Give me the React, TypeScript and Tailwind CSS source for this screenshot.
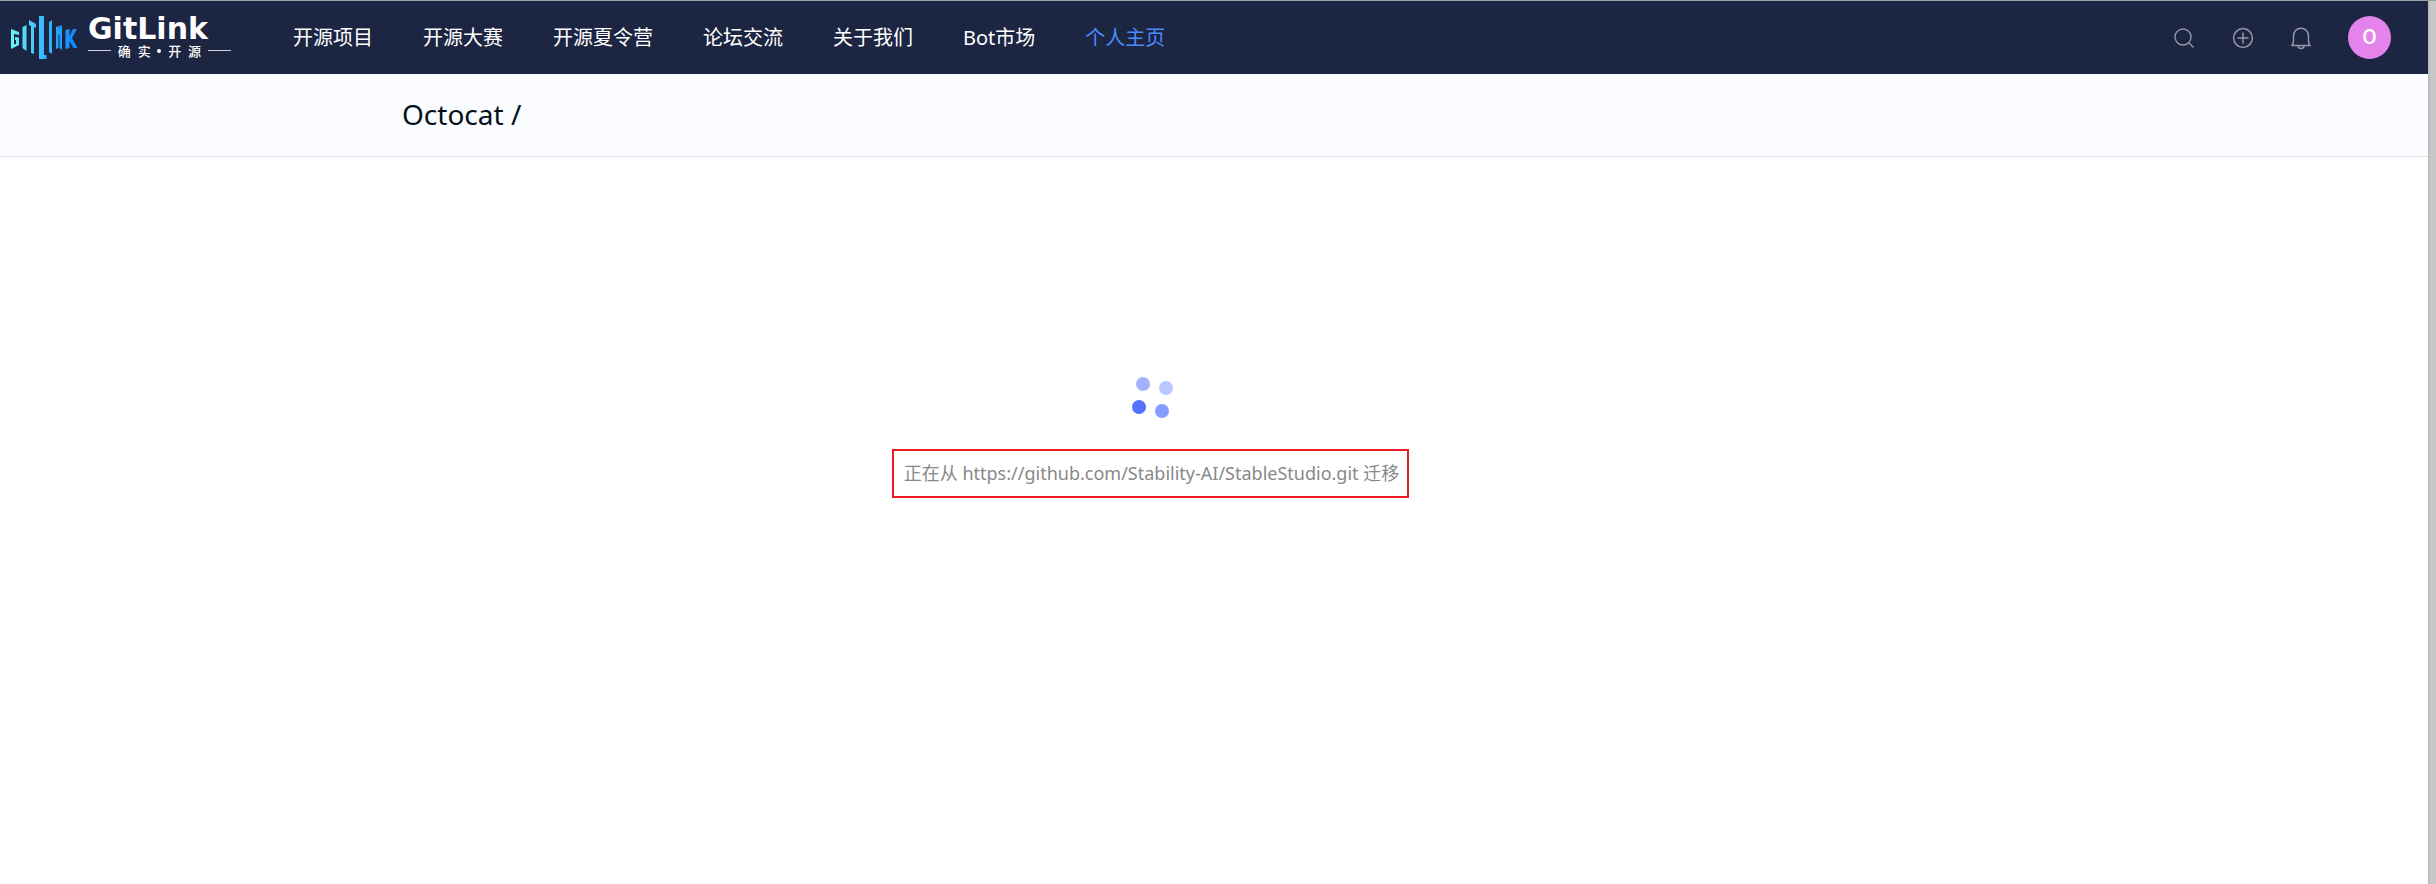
import React from "react";

const links = ["开源项目", "开源大赛", "开源夏令营", "论坛交流", "关于我们", "Bot市场", "个人主页"];

function LogoMark() {
  return (
    <svg width="68" height="44" viewBox="0 0 68 44" fill="none" aria-hidden="true">
      <defs>
        <linearGradient id="mark" x1="0" y1="0" x2="68" y2="0" gradientUnits="userSpaceOnUse">
          <stop offset="0" stopColor="#68f5fb" />
          <stop offset="0.5" stopColor="#38b8fb" />
          <stop offset="1" stopColor="#0a84ff" />
        </linearGradient>
      </defs>
      <g fill="url(#mark)">
        <path d="M1 13 9 16V19L4 18V28L6 28V24H5V21L9 21.500V29L1 33Z" />
        <path d="M12.500 11 16.500 9V35L12.500 32Z" />
        <path d="M19 4 26 8V12L24 11V38L21 37V10L19 9Z" />
        <path d="M29 0H34V39H36.500V43H29Z" />
        <path d="M39 6 42 4V38L39 36Z" />
        <path d="M46 11 48.500 10 49.500 13V9L52 10V34L49.500 32V20L48.500 18V32L46 33Z" />
        <path d="M55.500 14 59.500 13V20L63 13H67L62 22L67.500 32H63.500L59.500 25V32L55.500 33Z" />
      </g>
    </svg>
  );
}

function Header() {
  return (
    <header className="flex h-[74px] items-center border-t border-[#8fa8a8] bg-[#1c2541] pl-[10px] pr-[37px]">
      <a href="#" aria-label="GitLink" className="flex w-[222px] shrink-0 items-center gap-[10px] text-white">
        <LogoMark />
        <span className="flex w-[143px] flex-col">
          <span className="font-['DejaVu_Sans'] text-[30px] leading-[26px] font-bold">GitLink</span>
          <span className="flex items-center justify-between text-[13px] leading-[18px] font-medium">
            <span className="h-px w-[23px] bg-white/80" />
            <span>确</span>
            <span>实</span>
            <span className="size-1 rounded-full bg-white" />
            <span>开</span>
            <span>源</span>
            <span className="h-px w-[23px] bg-white/80" />
          </span>
        </span>
      </a>
      <nav className="ml-[61px] flex gap-[50px] text-[20px] leading-[30px] whitespace-nowrap">
        {links.map((label) => (
          <a key={label} href="#" className={label === "个人主页" ? "text-[#4a8cff]" : "text-white"}>
            {label}
          </a>
        ))}
      </nav>
      <div className="ml-auto flex items-center text-[#9498a6]">
        <button aria-label="搜索" className="mr-[38px]">
          <svg width="20" height="20" viewBox="0 0 20 20" fill="none" stroke="currentColor" strokeWidth="1.4">
            <circle cx="9" cy="9" r="8" />
            <path d="m14.5 14.5 5 5" />
          </svg>
        </button>
        <button aria-label="新建" className="mr-[37px]">
          <svg width="22" height="22" viewBox="0 0 22 22" fill="none" stroke="currentColor" strokeWidth="1.5">
            <circle cx="11" cy="11" r="9.4" />
            <path d="M11 5.5v11M5.5 11h11" />
          </svg>
        </button>
        <button aria-label="通知" className="mr-[37px]">
          <svg width="20" height="24" viewBox="0 0 20 24" fill="none" stroke="currentColor" strokeWidth="1.5">
            <path d="M1 19.5h18c-1.2-1.4-1.5-3-1.5-5V10C17.500 5.500 14.500 2.200 10 2.200S2.500 5.500 2.500 10v4.500c0 2-.3 3.600-1.500 5Z" />
            <path d="M7 19.500c0 4 6 4 6 0" />
          </svg>
        </button>
        <button className="flex size-[43px] items-center justify-center rounded-full bg-[#e583ec] font-['Roboto'] text-[21px] font-medium text-white">
          O
        </button>
      </div>
    </header>
  );
}

function Spinner() {
  return (
    <svg
      width="40"
      height="42"
      viewBox="0 0 40 42"
      className="overflow-visible"
      role="img"
      aria-label="加载中"
      fill="#5272ff"
    >
      <circle cx="12" cy="8" r="7" opacity="0.55" />
      <circle cx="35" cy="12" r="7" opacity="0.4" />
      <circle cx="31" cy="35" r="7" opacity="0.7" />
      <circle cx="8" cy="31" r="7" />
    </svg>
  );
}

export default function App() {
  return (
    <div className="flex min-h-screen bg-[#c6c6c6] font-['Noto_Sans','Noto_Sans_CJK_SC',sans-serif]">
      <div className="min-w-0 flex-1 bg-white">
        <Header />
        <div className="border-b border-[#dfe0e5] bg-[#fafcff] px-[402px] pt-[20px] pb-[22px]">
          <h1 className="text-[28px] leading-[40px] whitespace-nowrap text-[#05101a]">Octocat /</h1>
        </div>
        <main className="ml-[402px] flex max-w-[1497px] flex-col items-center pt-[219px]">
          <Spinner />
          <p className="mt-[31px] border-2 border-[#ed1c24] py-[9px] pr-[8px] pl-[10px] text-[18px] leading-[27px] whitespace-nowrap text-[#888]">
            正在从 https://github.com/Stability-AI/StableStudio.git 迁移
          </p>
        </main>
      </div>
      <div className="w-2 shrink-0 border-t border-[#8fa8a8] bg-linear-to-r from-[#b9b9b9] to-[#c8c8c8] to-40%" />
    </div>
  );
}
